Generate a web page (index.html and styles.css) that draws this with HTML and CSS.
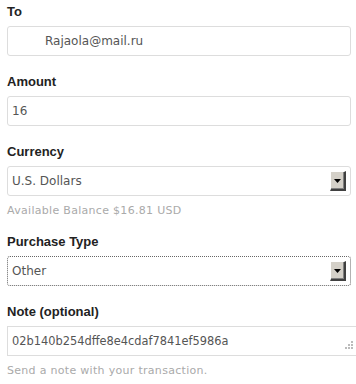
FILE: index.html
```html
<!DOCTYPE html>
<html>
<head>
<meta charset="utf-8">
<link rel="stylesheet" href="styles.css">
</head>
<body>
<form class="form">
  <div class="field">
    <div class="label">To</div>
    <div class="box to"><span>Rajaola@mail.ru</span></div>
  </div>
  <div class="field">
    <div class="label">Amount</div>
    <div class="box"><span>16</span></div>
  </div>
  <div class="field with-help">
    <div class="label">Currency</div>
    <div class="box select"><span>U.S. Dollars</span><span class="arrow"><svg width="7" height="4" viewBox="0 0 7 4"><path d="M0 0h7L3.5 4z" fill="#000"/></svg></span></div>
    <div class="help">Available Balance $16.81 USD</div>
  </div>
  <div class="field">
    <div class="label">Purchase Type</div>
    <div class="box select focus"><span>Other</span><span class="arrow"><svg width="7" height="4" viewBox="0 0 7 4"><path d="M0 0h7L3.5 4z" fill="#000"/></svg></span></div>
  </div>
  <div class="field with-help">
    <div class="label">Note (optional)</div>
    <div class="box note"><span>02b140b254dffe8e4cdaf7841ef5986a</span>
      <svg class="grip" width="9" height="9" viewBox="0 0 9 9"><g fill="#bbb"><rect x="7" y="1" width="2" height="2"/><rect x="4" y="4" width="2" height="2"/><rect x="7" y="4" width="2" height="2"/><rect x="1" y="7" width="2" height="2"/><rect x="4" y="7" width="2" height="2"/><rect x="7" y="7" width="2" height="2"/></g></svg>
    </div>
    <div class="help">Send a note with your transaction.</div>
  </div>
</form>
</body>
</html>
```
FILE: styles.css
```css
html, body { margin: 0; padding: 0; background: #fff; overflow: hidden; }
body { width: 356px; height: 384px; font-family: "DejaVu Sans", Verdana, sans-serif; }
.form { padding: 2px 5px 0 7px; display: flex; flex-direction: column; }
.field { display: flex; flex-direction: column; margin-bottom: 16px; }
.field.with-help { margin-bottom: 12px; }
.label { font-family: "Liberation Sans", Arial, sans-serif; font-weight: bold; font-size: 13px; color: #222; line-height: 20px; height: 20px; margin-bottom: 4px; }
.box { position: relative; height: 28px; border: 1px solid #ddd; border-radius: 3px; box-sizing: content-box; display: flex; align-items: center; padding-left: 4px; font-size: 12px; color: #555; }
.to { padding-left: 37px; }
.select .arrow { position: absolute; right: 4px; top: 4px; width: 13px; height: 17px; background: #d4d0c8; border-top: 1px solid #fff; border-left: 1px solid #fff; border-right: 2px solid #404040; border-bottom: 2px solid #404040; box-shadow: inset -1px -1px 0 #808080; display: flex; align-items: center; justify-content: center; }
.focus { border: 1px dotted #666; }
.note { margin-right: -8px; border-radius: 0; border-right: none; font-size: 11.4px; }
.grip { position: absolute; right: 6px; bottom: 6px; }
.help { font-size: 11px; letter-spacing: 0.3px; color: #aaa; margin-top: 6px; line-height: 18px; }
```
